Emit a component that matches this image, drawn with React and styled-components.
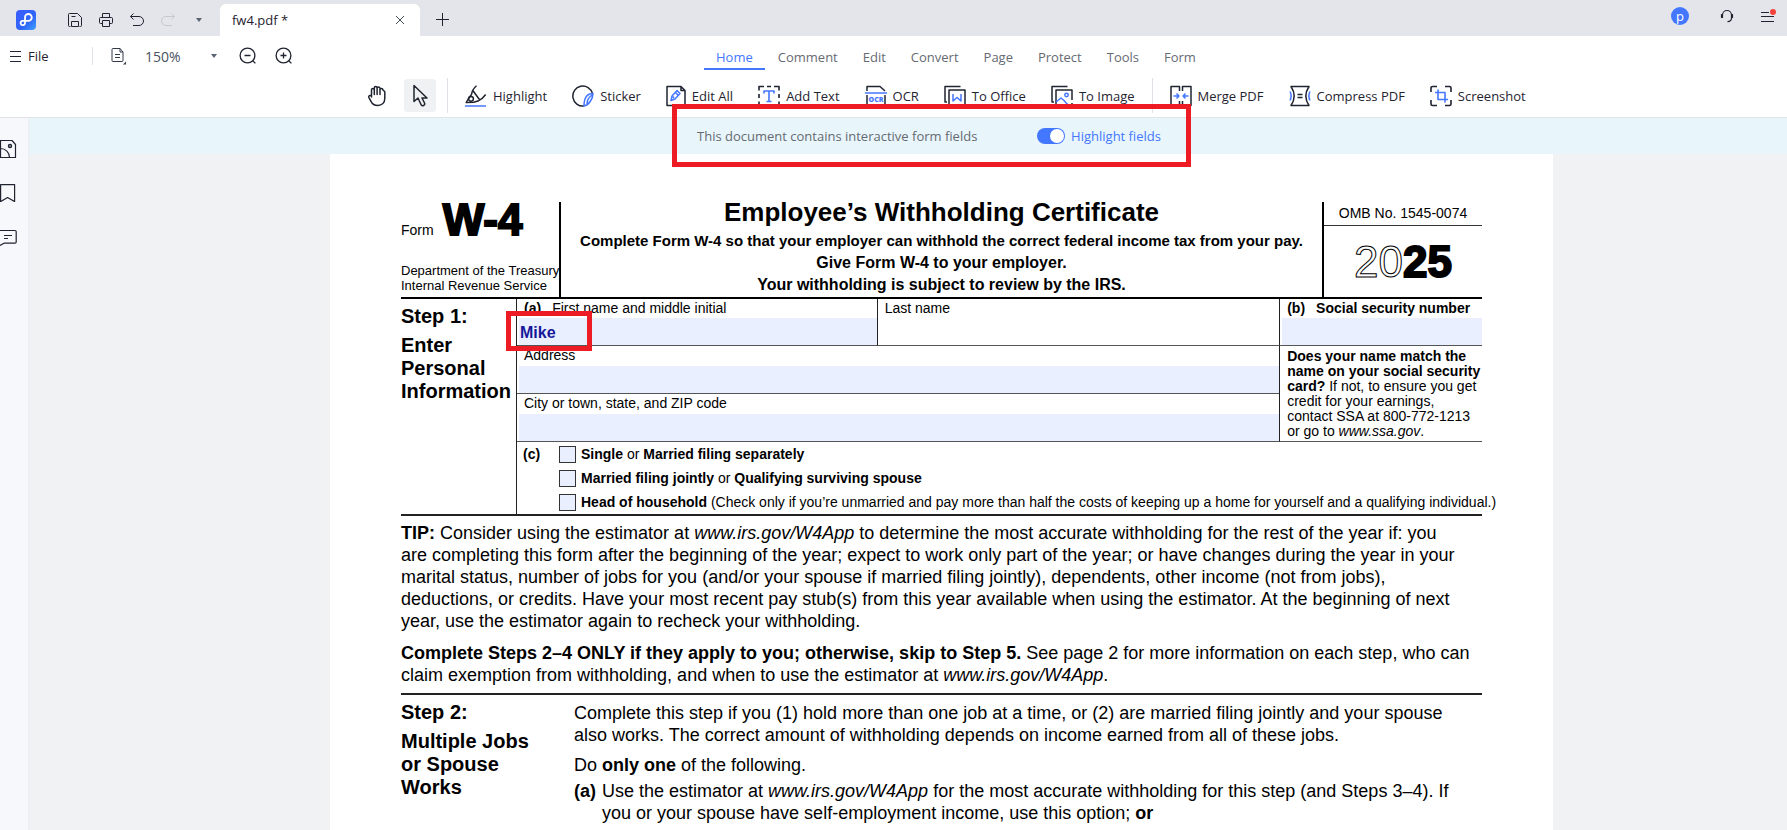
import React from "react";
import styled, { createGlobalStyle, css } from "styled-components";

const ink = "#1f2430";
const blue = "#4477ff";
const red = "#ed1c24";

const GlobalStyle = createGlobalStyle`
  * { box-sizing: border-box; }
  html, body { margin: 0; padding: 0; }
  body {
    font-family: "Open Sans", "Noto Sans", sans-serif;
    font-size: 13px;
    color: ${ink};
    background: #fff;
  }
  button, input, select { font: inherit; color: inherit; }
`;

const Shell = styled.div`
  display: flex;
  flex-direction: column;
  height: 100vh;
  overflow: hidden;
`;

const plainButton = css`
  display: flex;
  align-items: center;
  border: 0;
  padding: 0;
  background: none;
  white-space: nowrap;
`;

/* ---------- title bar ---------- */

const TitleBar = styled.header`
  display: flex;
  flex: none;
  height: 36px;
  background: #e4e5ea;
`;

const QuickAccess = styled.div`
  display: flex;
  align-items: center;
  gap: 15px;
  width: 220px;
  padding: 4px 0 0 16px;
`;

const Logo = styled.span`
  display: flex;
  margin-right: 16px;
`;

const IconButton = styled.button`
  ${plainButton}
  justify-content: center;
  width: ${(p) => p.$size || 16}px;
  height: ${(p) => p.$size || 16}px;
  color: ${(p) => (p.$muted ? "#c6c9d1" : ink)};
`;

const DocTab = styled.div`
  display: flex;
  align-items: center;
  justify-content: space-between;
  align-self: flex-end;
  width: 200px;
  height: 32px;
  padding: 0 16px 0 12px;
  background: #fff;
  border-radius: 6px 6px 0 0;
`;

const NewTab = styled.div`
  display: flex;
  align-items: center;
  padding: 3px 0 0 14px;
`;

const Account = styled.div`
  display: flex;
  align-items: center;
  gap: 25px;
  margin-left: auto;
  padding: 0 11px 4px 0;
`;

const Avatar = styled.button`
  ${plainButton}
  justify-content: center;
  width: 18px;
  height: 18px;
  margin-right: 5px;
  border-radius: 50%;
  background: ${blue};
  color: #fff;
  line-height: 16px;
`;

/* ---------- menu row ---------- */

const MenuRow = styled.div`
  display: flex;
  align-items: center;
  flex: none;
  height: 40px;
`;

const ViewTools = styled.div`
  display: flex;
  align-items: center;
  gap: 18px;
  flex: none;
  width: 704px;
  padding-left: 9px;
`;

const FileButton = styled.button`
  ${plainButton}
  gap: 6px;
  width: 65px;
`;

const Divider = styled.span`
  width: 1px;
  height: ${(p) => p.$height}px;
  background: #dfe1e6;
`;

const ZoomBox = styled.div`
  display: flex;
  align-items: center;
  width: 76px;
`;

const ZoomSelect = styled.select`
  appearance: none;
  width: 66px;
  border: 0;
  padding: 0;
  background: none;
  color: #4a5263;
  font-size: 14px;
`;

const Tabs = styled.nav`
  display: flex;
  gap: 1px;
`;

const Tab = styled.button`
  ${plainButton}
  height: 28px;
  padding: 3px 12px 0;
  border-bottom: 2px solid ${(p) => (p.$active ? blue : "transparent")};
  color: ${(p) => (p.$active ? blue : "#666a73")};
`;

/* ---------- tool row ---------- */

const ToolRow = styled.div`
  display: flex;
  align-items: center;
  flex: none;
  height: 42px;
  padding: 0 0 2px 361px;
  border-bottom: 1px solid #e1e3e8;
`;

const PointerTools = styled.div`
  display: flex;
  align-items: center;
  gap: 11px;
`;

const PointerButton = styled.button`
  ${plainButton}
  justify-content: center;
  width: 32px;
  height: 33px;
  border-radius: 3px;
  background: ${(p) => (p.$active ? "#f0f1f3" : "none")};
`;

const ToolGroup = styled.div`
  display: flex;
  align-items: center;
  gap: 25px;
  padding: 0 17px;
`;

const ToolButton = styled.button`
  ${plainButton}
  gap: 6px;
`;

/* ---------- work area ---------- */

const Work = styled.div`
  display: flex;
  flex: 1;
  min-height: 0;
`;

const SideRail = styled.aside`
  display: flex;
  flex-direction: column;
  gap: 26px;
  flex: none;
  width: 29px;
  padding-top: 22px;
  border-right: 1px solid #eceef1;
  background: #f7f8fb;
`;

const Viewer = styled.main`
  flex: 1;
  min-width: 0;
  display: flex;
  flex-direction: column;
  background: #f1f2f4;
`;

const Banner = styled.div`
  display: flex;
  flex: none;
  height: 36px;
  padding-left: 643px;
  background: #e8f6fc;
`;

const BannerMessage = styled.div`
  position: relative;
  display: flex;
  align-items: center;
  justify-content: space-between;
  width: 519px;
  padding: 0 30px 0 25px;
  color: #666a70;
`;

const Callout = styled.span`
  position: absolute;
  z-index: 2;
  border: 5px solid ${red};
  pointer-events: none;
`;

const BannerCallout = styled(Callout)`
  inset: -14px 0 -13px;
`;

const NameCallout = styled(Callout)`
  inset: 12px auto -6px -11px;
  width: 86px;
`;

const Switch = styled.label`
  display: flex;
  align-items: center;
  gap: 6px;
  color: ${blue};
`;

const SwitchInput = styled.input`
  appearance: none;
  display: flex;
  justify-content: flex-end;
  width: 28px;
  height: 16px;
  margin: 0;
  padding: 1px;
  border-radius: 8px;
  background: ${blue};
  &::before {
    content: "";
    width: 14px;
    height: 14px;
    border-radius: 50%;
    background: #fff;
  }
  &:not(:checked) {
    justify-content: flex-start;
    background: #a9aeb8;
  }
`;

/* ---------- paper form ---------- */

const Paper = styled.article`
  flex: 1;
  min-height: 0;
  margin: 0 234px 0 301px;
  padding: 48px 71px 0;
  background: #fff;
  color: #000;
  font-family: "Liberation Sans", Arial, sans-serif;
  font-size: 14px;
`;

const FormHeader = styled.header`
  display: grid;
  grid-template-columns: 160px minmax(0, 1fr) 160px;
  height: 97px;
  border-bottom: 2px solid #000;
`;

const FormId = styled.div`
  display: flex;
  flex-direction: column;
  justify-content: space-between;
  padding-bottom: 4px;
  border-right: 2px solid #000;
  font-size: 13px;
  line-height: 15px;
  white-space: nowrap;
`;

const FormNumber = styled.div`
  display: flex;
  align-items: baseline;
  gap: 9px;
  font-size: 14px;
  line-height: 36px;
  b {
    font-size: 44px;
    -webkit-text-stroke: 2px #000;
  }
`;

const FormHeading = styled.div`
  text-align: center;
  font-size: 16px;
  font-weight: 700;
  line-height: 22px;
  white-space: nowrap;
`;

const FormTitle = styled.h1`
  margin: 0 0 8px;
  font-size: 26px;
  line-height: 20px;
`;

const FormPurpose = styled.div`
  font-size: 15px;
`;

const FormYear = styled.div`
  display: flex;
  flex-direction: column;
  border-left: 2px solid #000;
  text-align: center;
`;

const Omb = styled.div`
  line-height: 23px;
  border-bottom: 1px solid #333;
`;

const Year = styled.div`
  display: flex;
  flex: 1;
  align-items: center;
  justify-content: center;
  font-size: 44px;
  b { -webkit-text-stroke: 2px #000; }
`;

const YearOutline = styled.span`
  color: #fff;
  -webkit-text-stroke: 1px #000;
`;

const Step = styled.section`
  display: grid;
  grid-template-columns: ${(p) => p.$aside}px minmax(0, 1fr);
  border-bottom: ${(p) => (p.$last ? "0" : "2px solid #222")};
`;

const StepTitle = styled.h2`
  margin: 0;
  padding-top: 6px;
  font-size: 20px;
  line-height: 23px;
`;

const StepName = styled.span`
  display: block;
  margin-top: 6px;
`;

const Fields = styled.div`
  display: grid;
  grid-template-columns: minmax(0, 360fr) minmax(0, 403fr) minmax(0, 203fr);
  border-left: 1px solid #222;
`;

const Cell = styled.div`
  position: relative;
  display: flex;
  flex-direction: column;
  justify-content: space-between;
  height: ${(p) => (p.$top ? 47 : 48)}px;
  border-bottom: 1px solid #555;
  border-left: ${(p) => (p.$first ? "0" : "1px solid #222")};
  grid-column: span ${(p) => p.$span || 1};
`;

const CellLabel = styled.label`
  display: flex;
  gap: 11px;
  padding-left: 7px;
  line-height: 18px;
  white-space: nowrap;
`;

const TextField = styled.input`
  min-width: 0;
  height: 27px;
  margin-left: 2px;
  padding: 2px 1px 0;
  border: 0;
  background: ${(p) => (p.$plain ? "transparent" : "#e9efff")};
  color: #17179a;
  font-size: 16px;
  font-weight: 700;
`;

const Note = styled.p`
  grid-column: 3;
  grid-row: 2 / span 2;
  margin: 0;
  padding: 3px 0 0 7px;
  border-left: 1px solid #222;
  border-bottom: 1px solid #555;
  line-height: 15px;
  white-space: nowrap;
`;

const Filing = styled.fieldset`
  grid-column: 1 / -1;
  display: grid;
  grid-template-columns: 36px minmax(0, 1fr);
  margin: 0;
  padding: 0 0 0 6px;
  border: 0;
  line-height: 24px;
  min-width: 0;
`;

const Choice = styled.label`
  grid-column: 2;
  display: flex;
  align-items: center;
  gap: 5px;
  height: 24px;
  white-space: nowrap;
`;

const Check = styled.input`
  appearance: none;
  flex: none;
  width: 17px;
  height: 17px;
  margin: 0;
  border: 1px solid #333;
  background: #e9efff;
  &:checked { background: #17179a; }
`;

const Prose = styled.div`
  font-size: 18px;
  line-height: 22px;
  white-space: nowrap;
  p { margin: 0; }
`;

const Intro = styled(Prose)`
  display: flex;
  flex-direction: column;
  gap: 10px;
  padding: 6px 0 7px;
  border-bottom: 2px solid #222;
`;

const StepBody = styled(Prose)`
  padding-top: 7px;
`;

const Lead = styled.div`
  margin: 8px 0 4px;
`;

const Option = styled.div`
  display: grid;
  grid-template-columns: 28px 1fr;
`;

const DocLink = styled.a`
  color: inherit;
  font-style: italic;
  text-decoration: none;
`;

/* ---------- icons ---------- */

const Svg = ({ w = 16, h, vb, sw = 1, children }) => (
  <svg
    width={w}
    height={h || w}
    viewBox={vb || `0 0 ${w} ${h || w}`}
    fill="none"
    stroke="currentColor"
    strokeWidth={sw}
    strokeLinejoin="round"
    aria-hidden="true"
  >
    {children}
  </svg>
);

const LogoIcon = () => (
  <Svg w={20}>
    <defs>
      <linearGradient id="logo" x1="0" y1="0" x2="1" y2="1">
        <stop offset="0" stopColor="#3a5cff" />
        <stop offset="0.6" stopColor="#2f66f8" />
        <stop offset="1" stopColor="#3fa0ff" />
      </linearGradient>
    </defs>
    <rect width="20" height="20" rx="4" fill="url(#logo)" stroke="none" />
    <path
      d="M9 11.500V7.300a3.400 3.400 0 1 1 3.400 3.500H6.300a2.200 2.200 0 1 0 2.700 2.200v-2"
      stroke="#fff"
      strokeWidth="1.800"
    />
  </Svg>
);

const SaveIcon = () => (
  <Svg>
    <path d="M3.500 14.500h-1a1 1 0 0 1-1-1v-11a1 1 0 0 1 1-1h8l4 4v8a1 1 0 0 1-1 1h-1M4.500 14.500v-5h7v5zM4.500 4.500h4" />
  </Svg>
);
const PrintIcon = () => (
  <Svg>
    <path d="M4.500 11.500h-2a1 1 0 0 1-1-1v-4a1 1 0 0 1 1-1h11a1 1 0 0 1 1 1v4a1 1 0 0 1-1 1h-2M4.500 5.500v-4h7v4M4.500 8.500h7v6h-7z" />
  </Svg>
);
const UndoIcon = () => (
  <Svg>
    <path d="M4.500 1.500L1.500 4.500l3 3M1.500 4.500h8.500a4.500 4.500 0 0 1 0 9H4" />
  </Svg>
);
const RedoIcon = () => (
  <Svg>
    <path d="M11.500 1.500l3 3-3 3M14.500 4.500H6a4.500 4.500 0 0 0 0 9h6" />
  </Svg>
);
const CaretIcon = () => (
  <Svg w={6} h={4}>
    <path d="M0 0h6L3 4z" fill="#5b6474" stroke="none" />
  </Svg>
);
const CloseIcon = () => (
  <Svg w={8}>
    <path d="M0 0l8 8M8 0L0 8" stroke="#444a55" />
  </Svg>
);
const PlusIcon = () => (
  <Svg w={13}>
    <path d="M6.500 0v13M0 6.500h13" />
  </Svg>
);
const HeadsetIcon = () => (
  <Svg w={14}>
    <path d="M2.500 9V6a4.500 4.500 0 0 1 9 0v3c0 2.500-1.500 3.500-4 3.700M2.500 5.500h-1v3h1M11.500 5.500h1v3h-1" strokeWidth="1.200" />
  </Svg>
);
const AlertMenuIcon = () => (
  <Svg w={16} h={14}>
    <path d="M1 3.500h8M1 7.500h13M1 12.500h13" strokeWidth="1.200" />
    <circle cx="13" cy="3" r="3" fill="#f4433c" stroke="none" />
  </Svg>
);
const BurgerIcon = () => (
  <Svg w={13} h={12}>
    <path d="M1 1.500h11M1 6.500h11M1 11.500h11" />
  </Svg>
);
const PageViewIcon = () => (
  <Svg w={16} h={18}>
    <path d="M2 1.500h7l3 3.500v8.500a1 1 0 0 1-1 1H2a1 1 0 0 1-1-1v-11a1 1 0 0 1 1-1zM9 1.500v3.500h3M4 7.500h5M4 10.500h5" stroke="#333a48" />
    <path d="M15 14.500v3h-3z" fill="#333a48" stroke="none" />
  </Svg>
);
const ZoomIcon = ({ plus }) => (
  <Svg w={18} sw={1.3}>
    <circle cx="8.500" cy="8.500" r="7.400" />
    <path d="M13.800 13.800l2.600 2.600M5.500 8.500h6" />
    {plus && <path d="M8.500 5.500v6" />}
  </Svg>
);
const HandIcon = () => (
  <Svg w={20} h={22} sw={1.5}>
    <path
      strokeLinecap="round"
      d="M4.500 12V5a1.400 1.400 0 0 1 2.800 0v4.500V3a1.400 1.400 0 0 1 2.800 0v6.500V3a1.500 1.500 0 0 1 2.900 0v6.500V4.800a1.400 1.400 0 0 1 2.800 0l2 2v6.500c0 4.500-2.800 7.200-7 7.200-3.500 0-5.500-1.500-6.800-4.200l-2.200-4a1.400 1.400 0 0 1 2.700-.8z"
    />
  </Svg>
);
const ArrowIcon = () => (
  <Svg w={17} h={23} sw={1.5}>
    <path d="M2 1.500v16l4-3.500 3 6.500a1.500 1.500 0 0 0 3.500-1.500l-2.500-5h5z" />
  </Svg>
);
const HighlightIcon = () => (
  <Svg w={22} sw={1.5}>
    <path d="M11.500.800C9 3 7 6 6.500 9.500L3.500 13.500 1.200 17.500l7.500-.200 5-1.600c3-1.500 5-3.500 7-6.200M7.800 5.500l7 9.500" />
    <circle cx="6" cy="13.800" r="2.400" />
    <path d="M0 21h21" stroke="#7399ff" strokeWidth="2" />
  </Svg>
);
const StickerIcon = () => (
  <Svg w={22} sw={1.5}>
    <path d="M12 21a10 10 0 1 1 8.500-12.500" />
    <path d="M21 8.500C15 8.500 12 13 12 21c5-1 9-7.500 9-12.500zM15 19c0-4 2-7 5-9" stroke={blue} />
  </Svg>
);
const EditAllIcon = () => (
  <Svg w={20} h={22} sw={1.5}>
    <path d="M1 1.500h14l4 4v15H1zM15 1.500v4h4" />
    <path d="M5 15.500l1-4.500 5-5.500 3 3-5 5.500zM9.500 7.500l3 3M8 11.500l-1 1.500" stroke={blue} />
  </Svg>
);
const AddTextIcon = () => (
  <Svg w={22} sw={1.6}>
    <path d="M1 5.500V1.500h5M9 1.500h4M16 1.500h5v4M1 9v4M21 9v4M1 16.500v4h5M9 20.500h4M16 20.500h5v-4" />
    <path d="M6 8.500V6h10v2.500M11 6v10M8.500 16.500h5" stroke={blue} />
  </Svg>
);
const OcrIcon = () => (
  <Svg w={22} sw={1.5}>
    <path d="M2 6V1.500h13L20 6M2 10v10.500h18V10" />
    <path d="M0 8h22" stroke={blue} />
    <text x="11" y="17" textAnchor="middle" fontSize="7" fontWeight="800" fill={blue} stroke="none">
      OCR
    </text>
  </Svg>
);
const OfficeIcon = () => (
  <Svg w={22} sw={1.5}>
    <path d="M16.500 1.500H1V17h2M5 5h16v16H5z" />
    <path d="M9 9v7l4-3.500 4 3.500V9" stroke={blue} />
  </Svg>
);
const ImageIcon = () => (
  <Svg w={22} sw={1.5}>
    <path d="M16.500 1.500H1V17h2M21 18v3H5V5h16v10" />
    <path d="M5 17l5-4 3 2.500 4 4.500" stroke={blue} />
    <circle cx="15.500" cy="10" r="1.700" stroke={blue} />
  </Svg>
);
const MergeIcon = () => (
  <Svg w={22} sw={1.5}>
    <path d="M9.500 6V1.500H1v19h8.500V16M12.500 6V1.500H21v19h-8.500V16" />
    <path d="M3.500 11h5M6.500 8.500L9 11l-2.500 2.500M18.500 11h-5M15.500 8.500L13 11l2.500 2.500" stroke={blue} />
  </Svg>
);
const CompressIcon = () => (
  <Svg w={22} sw={1.5}>
    <path d="M2 1.500h18c-4 6-4 13 0 19H2c4-6 4-13 0-19zM8.500 9.500h5M8.500 12.500h5" />
    <path d="M1 6.500c1.500 3 1.500 6 0 9M21 6.500c-1.500 3-1.500 6 0 9" stroke={blue} />
  </Svg>
);
const ScreenshotIcon = () => (
  <Svg w={22} sw={1.6}>
    <path d="M1 7V3a1.500 1.500 0 0 1 1.500-1.500H7M15 1.500h4.500A1.500 1.500 0 0 1 21 3v4M21 15v4a1.500 1.500 0 0 1-1.500 1.500H15M7 20.500H2.500A1.500 1.500 0 0 1 1 19v-4" />
    <path d="M8 4.500v10h10M5 7.500h10v10" stroke={blue} />
  </Svg>
);
const ThumbsIcon = () => (
  <Svg w={18} sw={1.2}>
    <path d="M.500 17.500V.500H12l3.500 4v13zM.500 8.500c5 0 9 4 9 9" />
    <circle cx="10" cy="6" r="1.600" fill="#8a8e98" />
  </Svg>
);
const BookmarkIcon = () => (
  <Svg w={18} sw={1.2}>
    <path d="M.600.600h14v17l-7-4-7 4z" />
  </Svg>
);
const CommentIcon = () => (
  <Svg w={18} sw={1.2}>
    <path d="M0 2.500h15a1.200 1.200 0 0 1 1.200 1.200V14a1.200 1.200 0 0 1-1.200 1.200H4L0 17.500M4 7.500h8M4 10.500h4" />
  </Svg>
);

/* ---------- data ---------- */

const tabs = ["Home", "Comment", "Edit", "Convert", "Page", "Protect", "Tools", "Form"];

const editTools = [
  ["Highlight", HighlightIcon],
  ["Sticker", StickerIcon],
  ["Edit All", EditAllIcon],
  ["Add Text", AddTextIcon],
  ["OCR", OcrIcon],
  ["To Office", OfficeIcon],
  ["To Image", ImageIcon],
];

const fileTools = [
  ["Merge PDF", MergeIcon],
  ["Compress PDF", CompressIcon],
  ["Screenshot", ScreenshotIcon],
];

const Tools = ({ items }) => (
  <ToolGroup>
    {items.map(([name, Icon]) => (
      <ToolButton key={name} type="button">
        <Icon />
        {name}
      </ToolButton>
    ))}
  </ToolGroup>
);

const Estimator = () => <DocLink href="https://www.irs.gov/W4App">www.irs.gov/W4App</DocLink>;

const Field = ({ id, tag, label, span, top, first, plain, bold, value, children }) => (
  <Cell $span={span} $top={top} $first={first}>
    <CellLabel htmlFor={id}>
      {tag && <b>{tag}</b>}
      {bold ? <b>{label}</b> : <span>{label}</span>}
    </CellLabel>
    <TextField id={id} type="text" defaultValue={value} $plain={plain} />
    {children}
  </Cell>
);

function W4Form() {
  return (
    <Paper>
      <FormHeader>
        <FormId>
          <FormNumber>
            Form <b>W-4</b>
          </FormNumber>
          <div>
            Department of the Treasury
            <br />
            Internal Revenue Service
          </div>
        </FormId>
        <FormHeading>
          <FormTitle>Employee’s Withholding Certificate</FormTitle>
          <FormPurpose>
            Complete Form W-4 so that your employer can withhold the correct federal income tax from your pay.
          </FormPurpose>
          Give Form W-4 to your employer.
          <br />
          Your withholding is subject to review by the IRS.
        </FormHeading>
        <FormYear>
          <Omb>OMB No. 1545-0074</Omb>
          <Year>
            <YearOutline>20</YearOutline>
            <b>25</b>
          </Year>
        </FormYear>
      </FormHeader>

      <Step $aside={115}>
        <StepTitle>
          Step 1:
          <StepName>
            Enter
            <br />
            Personal
            <br />
            Information
          </StepName>
        </StepTitle>
        <Fields>
          <Field id="first" tag="(a)" label="First name and middle initial" top first value="Mike">
            <NameCallout />
          </Field>
          <Field id="last" label="Last name" top plain />
          <Field id="ssn" tag="(b)" label="Social security number" top bold />
          <Field id="address" label="Address" span={2} first />
          <Note>
            <b>
              Does your name match the
              <br />
              name on your social security
              <br />
              card?
            </b>{" "}
            If not, to ensure you get
            <br />
            credit for your earnings,
            <br />
            contact SSA at 800-772-1213
            <br />
            or go to <DocLink href="https://www.ssa.gov">www.ssa.gov</DocLink>.
          </Note>
          <Field id="city" label="City or town, state, and ZIP code" span={2} first />
          <Filing>
            <b>(c)</b>
            <Choice>
              <Check type="checkbox" />
              <span>
                <b>Single</b> or <b>Married filing separately</b>
              </span>
            </Choice>
            <Choice>
              <Check type="checkbox" />
              <span>
                <b>Married filing jointly</b> or <b>Qualifying surviving spouse</b>
              </span>
            </Choice>
            <Choice>
              <Check type="checkbox" />
              <span>
                <b>Head of household</b> (Check only if you’re unmarried and pay more than half the costs of keeping up
                a home for yourself and a qualifying individual.)
              </span>
            </Choice>
          </Filing>
        </Fields>
      </Step>

      <Intro>
        <p>
          <b>TIP:</b> Consider using the estimator at <Estimator /> to determine the most accurate withholding for the
          rest of the year if: you
          <br />
          are completing this form after the beginning of the year; expect to work only part of the year; or have
          changes during the year in your
          <br />
          marital status, number of jobs for you (and/or your spouse if married filing jointly), dependents, other
          income (not from jobs),
          <br />
          deductions, or credits. Have your most recent pay stub(s) from this year available when using the estimator.
          At the beginning of next
          <br />
          year, use the estimator again to recheck your withholding.
        </p>
        <p>
          <b>Complete Steps 2–4 ONLY if they apply to you; otherwise, skip to Step 5.</b> See page 2 for more
          information on each step, who can
          <br />
          claim exemption from withholding, and when to use the estimator at <Estimator />.
        </p>
      </Intro>

      <Step $aside={173} $last>
        <StepTitle>
          Step 2:
          <StepName>
            Multiple Jobs
            <br />
            or Spouse
            <br />
            Works
          </StepName>
        </StepTitle>
        <StepBody>
          <p>
            Complete this step if you (1) hold more than one job at a time, or (2) are married filing jointly and your
            spouse
            <br />
            also works. The correct amount of withholding depends on income earned from all of these jobs.
          </p>
          <Lead>
            Do <b>only one</b> of the following.
          </Lead>
          <Option>
            <b>(a)</b>
            <p>
              Use the estimator at <Estimator /> for the most accurate withholding for this step (and Steps 3–4). If
              <br />
              you or your spouse have self-employment income, use this option; <b>or</b>
            </p>
          </Option>
        </StepBody>
      </Step>
    </Paper>
  );
}

export default function App() {
  return (
    <Shell>
      <GlobalStyle />
      <TitleBar>
        <QuickAccess>
          <Logo>
            <LogoIcon />
          </Logo>
          <IconButton type="button" aria-label="Save"><SaveIcon /></IconButton>
          <IconButton type="button" aria-label="Print"><PrintIcon /></IconButton>
          <IconButton type="button" aria-label="Undo"><UndoIcon /></IconButton>
          <IconButton type="button" aria-label="Redo" $muted><RedoIcon /></IconButton>
          <IconButton type="button" aria-label="More actions"><CaretIcon /></IconButton>
        </QuickAccess>
        <DocTab>
          fw4.pdf *
          <IconButton type="button" aria-label="Close tab" $size={8}><CloseIcon /></IconButton>
        </DocTab>
        <NewTab>
          <IconButton type="button" aria-label="New tab"><PlusIcon /></IconButton>
        </NewTab>
        <Account>
          <Avatar type="button">p</Avatar>
          <IconButton type="button" aria-label="Support"><HeadsetIcon /></IconButton>
          <IconButton type="button" aria-label="Menu"><AlertMenuIcon /></IconButton>
        </Account>
      </TitleBar>

      <MenuRow>
        <ViewTools>
          <FileButton type="button">
            <BurgerIcon />
            File
          </FileButton>
          <Divider $height={18} />
          <IconButton type="button" aria-label="Page view"><PageViewIcon /></IconButton>
          <ZoomBox>
            <ZoomSelect aria-label="Zoom" defaultValue="150%">
              <option>100%</option>
              <option>150%</option>
              <option>200%</option>
            </ZoomSelect>
            <CaretIcon />
          </ZoomBox>
          <IconButton type="button" aria-label="Zoom out" $size={18}><ZoomIcon /></IconButton>
          <IconButton type="button" aria-label="Zoom in" $size={18}><ZoomIcon plus /></IconButton>
        </ViewTools>
        <Tabs>
          {tabs.map((name) => (
            <Tab key={name} type="button" $active={name === "Home"}>
              {name}
            </Tab>
          ))}
        </Tabs>
      </MenuRow>

      <ToolRow>
        <PointerTools>
          <PointerButton type="button" aria-label="Hand"><HandIcon /></PointerButton>
          <PointerButton type="button" aria-label="Select" $active><ArrowIcon /></PointerButton>
          <Divider $height={35} />
        </PointerTools>
        <Tools items={editTools} />
        <Divider $height={35} />
        <Tools items={fileTools} />
      </ToolRow>

      <Work>
        <SideRail>
          <IconButton type="button" aria-label="Thumbnails" $size={18}><ThumbsIcon /></IconButton>
          <IconButton type="button" aria-label="Bookmarks" $size={18}><BookmarkIcon /></IconButton>
          <IconButton type="button" aria-label="Comments" $size={18}><CommentIcon /></IconButton>
        </SideRail>
        <Viewer>
          <Banner>
            <BannerMessage>
              <span>This document contains interactive form fields</span>
              <Switch>
                <SwitchInput type="checkbox" role="switch" defaultChecked />
                Highlight fields
              </Switch>
              <BannerCallout />
            </BannerMessage>
          </Banner>
          <W4Form />
        </Viewer>
      </Work>
    </Shell>
  );
}
